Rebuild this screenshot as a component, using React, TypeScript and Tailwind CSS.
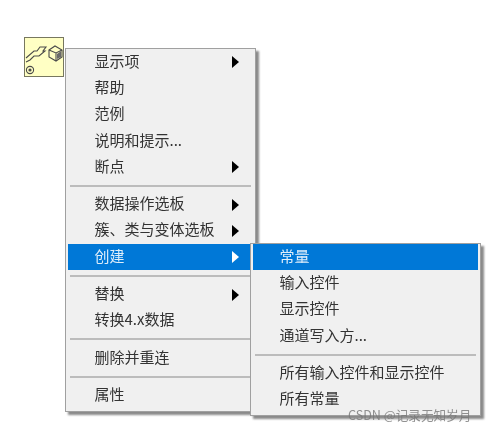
const font = { fontFamily: '"Noto Sans CJK SC", "Liberation Sans", sans-serif' };

function Arrow({ active }: { active?: boolean }) {
  return (
    <svg width="7" height="12" viewBox="0 0 7 12" className="shrink-0">
      <path d="M0 0 L7 6 L0 12 Z" fill={active ? "#ffffff" : "#000000"} />
    </svg>
  );
}

function Row({ label, arrow, active }: { label: string; arrow?: boolean; active?: boolean }) {
  return (
    <div
      className={`h-[26.3px] flex items-center justify-between pl-[27px] pr-[14px] text-[15px] leading-none ${
        active ? "bg-[#0078d7] text-[#dfeefa]" : "text-[#333333]"
      }`}
    >
      <span className="pb-[4px]">{label}</span>
      {arrow && <Arrow active={active} />}
    </div>
  );
}

function Sep() {
  return (
    <div className="h-[11px] flex items-center px-[2px]">
      <div className="h-[2px] w-full bg-[#bcbcbc]" />
    </div>
  );
}

function NodeIcon() {
  return (
    <div className="w-[40px] h-[40px] shrink-0 bg-[#ffffc4] border border-[#77775f]">
      <svg width="38" height="38" viewBox="0 0 38 38" fill="none" stroke="#4a4a4a" strokeWidth="1.1">
        <path d="M1 20 L9 13 L12 13 L15 9 L21 9 L18 13 L20 13 L14 18 L9 18 L5 22 L1 24" />
        <path d="M24 12 L30 8 L37 12 L37 19 L31 23 L24 19 Z" />
        <path d="M24 12 L31 15 L37 12 M31 15 L31 23" />
        <path d="M32 16 L36 13 L36 19 L32 21 Z" fill="#6a6a6a" stroke="none" />
        <circle cx="5" cy="32" r="3.6" />
        <circle cx="5" cy="32" r="1.6" fill="#4a4a4a" stroke="none" />
      </svg>
    </div>
  );
}

export default function App() {
  return (
    <div className="relative w-[487px] h-[431px] bg-white overflow-hidden pl-[24px] pt-[37px] flex items-start gap-[0.5px] blur-[0.3px]" style={font}>
      <NodeIcon />

      <div className="relative mt-[11px] w-[191px] bg-[#f0f0f0] border border-[#a0a0a0] shadow-[3px_3px_2px_#8a8a8a] px-[2px] pb-[2px]">
        <Row label="显示项" arrow />
        <Row label="帮助" />
        <Row label="范例" />
        <Row label="说明和提示..." />
        <Row label="断点" arrow />
        <Sep />
        <Row label="数据操作选板" arrow />
        <Row label="簇、类与变体选板" arrow />
        <Row label="创建" arrow active />
        <Sep />
        <Row label="替换" arrow />
        <Row label="转换4.x数据" />
        <Sep />
        <Row label="删除并重连" />
        <Sep />
        <Row label="属性" />

        {/* Submenu */}
        <div className="absolute left-[184px] top-[194px] w-[231px] bg-[#f0f0f0] border border-[#a0a0a0] shadow-[3px_3px_2px_#8a8a8a] px-[2px] pb-[2px]">
          <Row label="常量" active />
          <Row label="输入控件" />
          <Row label="显示控件" />
          <Row label="通道写入方..." />
          <Sep />
          <Row label="所有输入控件和显示控件" />
          <Row label="所有常量" />
        </div>
      </div>

      <span className="absolute left-[348px] top-[407px] text-[12.6px] leading-[16px] text-[#777777]/80 whitespace-nowrap">
        CSDN @记录无知岁月
      </span>
    </div>
  );
}
